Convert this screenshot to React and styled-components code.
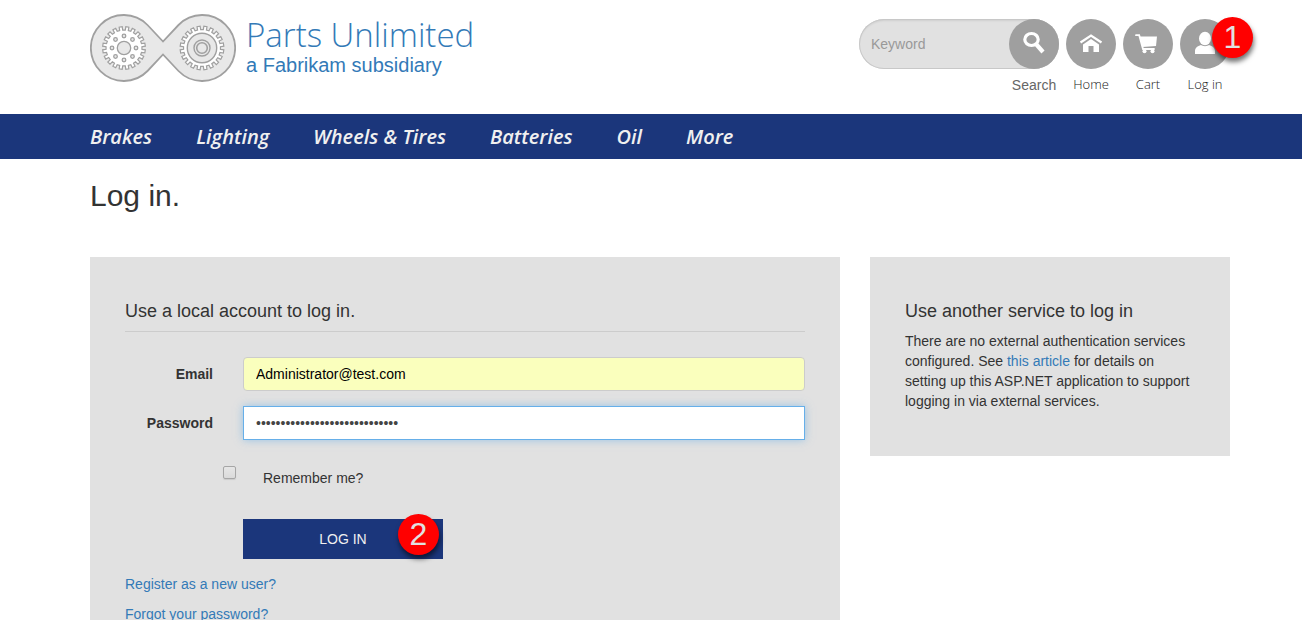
import React from "react";
import styled, { createGlobalStyle } from "styled-components";

const NAVY = "#1b367b";
const LINK = "#337ab7";
const PANEL = "#e1e1e1";
const SANS = '"Liberation Sans", Arial, sans-serif';
const HUMANIST = '"Open Sans", "Noto Sans", sans-serif';

const GlobalStyle = createGlobalStyle`
  *, *::before, *::after { box-sizing: border-box; }
  body {
    margin: 0;
    background: #fff;
    color: #333;
    font: 14px/20px ${SANS};
  }
  a { color: ${LINK}; text-decoration: none; }
  input, button { font: inherit; }
`;

const Page = styled.div`
  height: 100vh;
  overflow: hidden;
`;

const Container = styled.div`
  padding: 0 72px 0 90px;
`;

const Header = styled(Container).attrs({ as: "header" })`
  display: flex;
  justify-content: space-between;
  align-items: flex-start;
  height: 114px;
`;

const Brand = styled.a`
  display: flex;
  gap: 10px;
  padding-top: 13px;
`;

const BrandText = styled.span`
  display: flex;
  flex-direction: column;
  white-space: nowrap;
`;

const BrandName = styled.span`
  font: 300 33px/40px ${HUMANIST};
  padding-top: 2px;
`;

const BrandTagline = styled.span`
  font-size: 20px;
  line-height: 20px;
`;

const Tools = styled.div`
  display: flex;
  gap: 7px;
  padding-top: 19px;
`;

const SearchForm = styled.form`
  display: flex;
  flex-direction: column;
  align-items: flex-end;
`;

const SearchPill = styled.div`
  display: flex;
  width: 200px;
  height: 50px;
  border-radius: 25px;
  background: ${PANEL};
  box-shadow: inset 0 0 0 1px #c8c8c8, inset 0 2px 2px rgba(0, 0, 0, 0.08);
`;

const SearchInput = styled.input`
  flex: 1;
  min-width: 0;
  padding: 0 0 0 12px;
  border: 0;
  outline: 0;
  background: transparent;
  color: #555;
  &::placeholder { color: #999; opacity: 1; }
`;

const SearchButton = styled.button`
  display: block;
  width: 50px;
  height: 50px;
  padding: 0;
  border: 0;
  border-radius: 50%;
  background: #9f9f9f;
`;

const SearchLabel = styled.label`
  width: 50px;
  padding-top: 6px;
  text-align: center;
  color: #666;
`;

const ToolLink = styled.a`
  position: relative;
  display: flex;
  flex-direction: column;
  align-items: center;
  width: 50px;
  color: #222;
  font: 300 13px/20px ${HUMANIST};
`;

const ToolDisc = styled.span`
  width: 50px;
  height: 50px;
  margin-bottom: 5px;
  border-radius: 50%;
  background: #9f9f9f;
`;

const Callout = styled.span`
  position: absolute;
  top: ${(p) => p.$top}px;
  left: ${(p) => p.$left}px;
  width: 41px;
  height: 41px;
  border-radius: 50%;
  background: #f00;
  color: #e1e1e1;
  font: 32px/41px ${SANS};
  text-align: center;
  box-shadow: 1px 4px 5px rgba(0, 0, 0, 0.55);
`;

const NavBar = styled.nav`
  background: ${NAVY};
`;

const NavList = styled(Container)`
  display: flex;
  gap: 44px;
`;

const NavLink = styled.a`
  color: #f0f0f0;
  font: italic 600 20px/45px ${HUMANIST};
  white-space: nowrap;
`;

const Title = styled.h1`
  margin: 20px 0 45px;
  font-size: 30px;
  line-height: 33px;
  font-weight: 400;
`;

const Columns = styled.div`
  display: grid;
  grid-template-columns: 25fr 12fr;
  gap: 30px;
  align-items: start;
`;

const Panel = styled.section`
  padding: 35px;
  background: ${PANEL};
`;

const PanelTitle = styled.h2`
  margin: 10px 0;
  font-size: 18px;
  line-height: 19px;
  font-weight: 400;
`;

const Paragraph = styled.p`
  margin: 0 0 10px;
`;

const Divider = styled.hr`
  margin: 0 0 25px;
  border: 0;
  border-top: 1px solid #ccc;
`;

const Field = styled.div`
  display: grid;
  grid-template-columns: 88px 1fr;
  column-gap: 30px;
  align-items: center;
  margin-bottom: 15px;
`;

const FieldLabel = styled.label`
  text-align: right;
  font-weight: 700;
`;

const TextInput = styled.input`
  width: 100%;
  height: 34px;
  padding: 6px 12px;
  border: 1px solid #ccc;
  border-radius: 4px;
  outline: 0;
  background: #faffbd;
  color: #000;
`;

const PasswordInput = styled(TextInput)`
  border-color: #66afe9;
  border-radius: 0;
  background: #fff;
  color: #444;
  box-shadow: 0 0 8px rgba(102, 175, 233, 0.6);
`;

const RememberRow = styled.div`
  display: flex;
  gap: 27px;
  padding: 11px 0 30px 98px;
`;

const Checkbox = styled.input`
  appearance: none;
  width: 13px;
  height: 13px;
  margin: 0;
  border: 1px solid #a6a6a6;
  border-radius: 2px;
  background: linear-gradient(#e6e6e6, #dadada);
  box-shadow: 0 1px 1px rgba(0, 0, 0, 0.1);
`;

const RememberLabel = styled.label`
  padding: 2px 0 1px;
`;

const SubmitRow = styled.div`
  position: relative;
  width: 200px;
  margin: 0 0 15px 118px;
`;

const SubmitButton = styled.button`
  display: block;
  width: 100%;
  height: 40px;
  padding: 0;
  border: 0;
  background: ${NAVY};
  color: #f0f0f0;
`;

const navItems = ["Brakes", "Lighting", "Wheels & Tires", "Batteries", "Oil", "More"];

function gearPath(cx, cy, outer, inner, teeth) {
  const step = (Math.PI * 2) / teeth;
  const points = [];
  for (let i = 0; i < teeth; i += 1) {
    [[-0.27, inner], [-0.23, outer], [0.23, outer], [0.27, inner]].forEach(([t, r]) => {
      const angle = (i + 0.5 + t) * step;
      points.push(`${(cx + Math.cos(angle) * r).toFixed(2)} ${(cy + Math.sin(angle) * r).toFixed(2)}`);
    });
  }
  return `M${points.join("L")}Z`;
}

function Logo() {
  const holes = Array.from({ length: 8 }, (_, i) => (i * Math.PI) / 4);
  return (
    <svg width="146" height="70" viewBox="0 0 146 70" fill="#e8e8e8" stroke="#a0a0a0" aria-hidden="true">
      <path
        d="M73 28.5 57.5 12A33 33 0 1 0 57.5 58L73 41.5 88.500 58A33 33 0 1 0 88.500 12Z"
        strokeWidth="1.800"
      />
      <path d={gearPath(34, 35, 21.4, 18, 20)} fill="#fff" strokeWidth="1.200" />
      <circle cx="34" cy="35" r="6.700" strokeWidth="1.300" />
      {holes.map((a) => (
        <circle key={a} cx={34 + Math.cos(a) * 12} cy={35 + Math.sin(a) * 12} r="1.800" strokeWidth="1.300" />
      ))}
      <path d={gearPath(112, 35, 21.9, 18.5, 20)} fill="#fff" strokeWidth="1.200" />
      <circle cx="112" cy="35" r="14.700" strokeWidth="1.400" />
      <circle cx="112" cy="35" r="8" strokeWidth="1.400" />
      <circle cx="112" cy="35" r="5.300" strokeWidth="1.600" />
    </svg>
  );
}

const SearchIcon = () => (
  <svg width="50" height="50" viewBox="0 0 50 50" fill="none" stroke="#fff" aria-hidden="true">
    <ellipse cx="22.500" cy="20.500" rx="6.700" ry="6" strokeWidth="3.200" />
    <path d="m27 25 7 8" strokeWidth="4.200" />
  </svg>
);

const HomeIcon = () => (
  <svg width="50" height="50" viewBox="0 0 50 50" fill="#fff" aria-hidden="true">
    <path d="m14.500 23.500 10.500-7 10.500 7" fill="none" stroke="#fff" strokeWidth="2.200" />
    <path d="m25 20 8 5.500V33h-5.500v-6h-5v6H17v-7.500Z" />
  </svg>
);

const CartIcon = () => (
  <svg width="50" height="50" viewBox="0 0 50 50" fill="#fff" aria-hidden="true">
    <path d="M16.500 17.500H34L33 27 19.500 28Z" />
    <path d="M13 16.200h3.200L20 30h11" fill="none" stroke="#fff" strokeWidth="1.800" strokeLinecap="round" />
    <circle cx="21.500" cy="32.200" r="2" />
    <circle cx="29.500" cy="32.200" r="2" />
  </svg>
);

const UserIcon = () => (
  <svg width="50" height="50" viewBox="0 0 50 50" fill="#fff" aria-hidden="true">
    <ellipse cx="25" cy="19.500" rx="6" ry="6.800" />
    <path d="M15 35v-3c0-3 2.500-5 6-6 2 1.500 6 1.500 8 0 3.500 1 6 3 6 6v3Z" />
  </svg>
);

function Tool({ icon, label, children }) {
  return (
    <ToolLink href="#">
      <ToolDisc>{icon}</ToolDisc>
      {label}
      {children}
    </ToolLink>
  );
}

export default function App() {
  return (
    <Page>
      <GlobalStyle />
      <Header>
        <Brand href="#">
          <Logo />
          <BrandText>
            <BrandName>Parts Unlimited</BrandName>
            <BrandTagline>a Fabrikam subsidiary</BrandTagline>
          </BrandText>
        </Brand>
        <Tools>
          <SearchForm>
            <SearchPill>
              <SearchInput id="keyword" type="text" placeholder="Keyword" />
              <SearchButton type="button" aria-label="Search">
                <SearchIcon />
              </SearchButton>
            </SearchPill>
            <SearchLabel htmlFor="keyword">Search</SearchLabel>
          </SearchForm>
          <Tool icon={<HomeIcon />} label="Home" />
          <Tool icon={<CartIcon />} label="Cart" />
          <Tool icon={<UserIcon />} label="Log in">
            <Callout $top={-2} $left={32}>1</Callout>
          </Tool>
        </Tools>
      </Header>
      <NavBar>
        <NavList>
          {navItems.map((item) => (
            <NavLink key={item} href="#">{item}</NavLink>
          ))}
        </NavList>
      </NavBar>
      <Container as="main">
        <Title>Log in.</Title>
        <Columns>
          <Panel>
            <PanelTitle>Use a local account to log in.</PanelTitle>
            <Divider />
            <form>
              <Field>
                <FieldLabel htmlFor="email">Email</FieldLabel>
                <TextInput id="email" type="email" defaultValue="Administrator@test.com" />
              </Field>
              <Field>
                <FieldLabel htmlFor="password">Password</FieldLabel>
                <PasswordInput id="password" type="password" defaultValue={"x".repeat(29)} />
              </Field>
              <RememberRow>
                <Checkbox id="remember" type="checkbox" />
                <RememberLabel htmlFor="remember">Remember me?</RememberLabel>
              </RememberRow>
              <SubmitRow>
                <SubmitButton type="button">LOG IN</SubmitButton>
                <Callout $top={-5} $left={155}>2</Callout>
              </SubmitRow>
              <Paragraph><a href="#">Register as a new user?</a></Paragraph>
              <Paragraph><a href="#">Forgot your password?</a></Paragraph>
            </form>
          </Panel>
          <Panel>
            <PanelTitle>Use another service to log in</PanelTitle>
            <Paragraph>
              There are no external authentication services configured. See <a href="#">this article</a> for
              details on setting up this ASP.NET application to support logging in via external services.
            </Paragraph>
          </Panel>
        </Columns>
      </Container>
    </Page>
  );
}
